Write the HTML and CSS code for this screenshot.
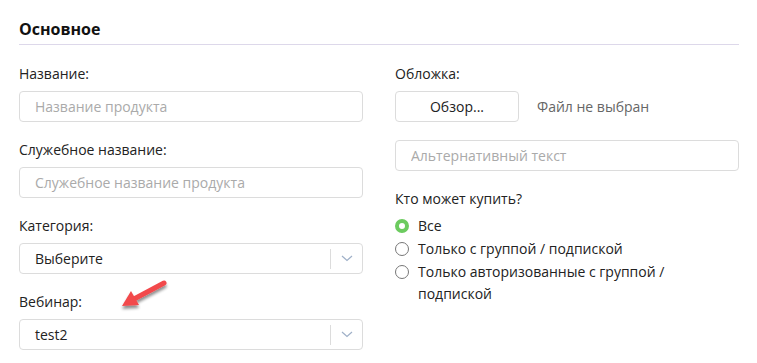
FILE: index.html
```html
<!DOCTYPE html>
<html lang="ru">
<head>
    <meta charset="UTF-8">
    <meta name="viewport" content="width=device-width, initial-scale=1.0">
    <title>Основное</title>
    <link rel="stylesheet" href="styles.css">
</head>
<body>
    <div class="page">
        <h2 class="section-title">Основное</h2>
        <div class="columns">
            <div class="col">
                <div class="field">
                    <label class="field-label">Название:</label>
                    <input class="text-input" type="text" placeholder="Название продукта">
                </div>
                <div class="field">
                    <label class="field-label">Служебное название:</label>
                    <input class="text-input" type="text" placeholder="Служебное название продукта">
                </div>
                <div class="field">
                    <label class="field-label">Категория:</label>
                    <div class="select">
                        <span class="select-value">Выберите</span>
                        <span class="select-arrow">
                            <svg width="12" height="7" viewBox="0 0 12 7"><path d="M1 1l5 4.5L11 1" fill="none" stroke="#9fb0c8" stroke-width="1.2"/></svg>
                        </span>
                    </div>
                </div>
                <div class="field webinar">
                    <label class="field-label">Вебинар:</label>
                    <div class="select">
                        <span class="select-value">test2</span>
                        <span class="select-arrow">
                            <svg width="12" height="7" viewBox="0 0 12 7"><path d="M1 1l5 4.5L11 1" fill="none" stroke="#9fb0c8" stroke-width="1.2"/></svg>
                        </span>
                    </div>
                    <!-- стрелка-пометка -->
                    <svg class="pointer" width="60" height="40" viewBox="0 0 60 40">
                        <defs>
                            <filter id="sh" x="-30%" y="-30%" width="160%" height="160%">
                                <feGaussianBlur in="SourceAlpha" stdDeviation="1.6"/>
                                <feOffset dx="0" dy="3"/>
                                <feComponentTransfer><feFuncA type="linear" slope="0.45"/></feComponentTransfer>
                                <feMerge><feMergeNode/><feMergeNode in="SourceGraphic"/></feMerge>
                            </filter>
                        </defs>
                        <g filter="url(#sh)">
                            <path d="M54 6 L24 22" stroke="#f2484b" stroke-width="5" stroke-linecap="round" fill="none"/>
                            <path d="M12 29 L21 14 L29 28 Z" fill="#f2484b"/>
                        </g>
                    </svg>
                </div>
            </div>
            <div class="col">
                <div class="field">
                    <label class="field-label">Обложка:</label>
                    <div class="file-row">
                        <button class="file-btn" type="button">Обзор...</button>
                        <span class="file-name">Файл не выбран</span>
                    </div>
                </div>
                <div class="field alt-field">
                    <input class="text-input" type="text" placeholder="Альтернативный текст">
                </div>
                <div class="field">
                    <label class="field-label">Кто может купить?</label>
                    <div class="radio-list">
                        <label class="radio-row"><span class="radio checked"></span><span>Все</span></label>
                        <label class="radio-row"><span class="radio"></span><span>Только с группой / подпиской</span></label>
                        <label class="radio-row"><span class="radio"></span><span>Только авторизованные с группой / подпиской</span></label>
                    </div>
                </div>
            </div>
        </div>
    </div>
</body>
</html>
```
FILE: styles.css
```css
body {
    margin: 0;
    font-family: 'Open Sans', 'Liberation Sans', sans-serif;
    font-size: 14px;
    color: #222;
    background: #fff;
}
.page {
    padding: 0 18px 0 19px;
}
.section-title {
    margin: 0 0 19px;
    padding: 18px 0 4px;
    font-size: 16px;
    line-height: 22px;
    font-weight: 700;
    color: #111;
    border-bottom: 1px solid #ddd8ea;
}
.columns {
    display: grid;
    grid-template-columns: 344px 344px;
    column-gap: 32px;
}
.field {
    display: flex;
    flex-direction: column;
    margin-bottom: 18px;
}
.field-label {
    line-height: 20px;
    margin-bottom: 7px;
}
.text-input {
    box-sizing: border-box;
    height: 31px;
    width: 100%;
    padding: 0 15px;
    border: 1px solid #dcdcdc;
    border-radius: 4px;
    font-family: inherit;
    font-size: 14px;
    color: #222;
    outline: none;
}
.text-input::placeholder {
    color: #aaa;
}
.select {
    box-sizing: border-box;
    height: 31px;
    display: flex;
    align-items: center;
    border: 1px solid #dcdcdc;
    border-radius: 4px;
}
.select-value {
    flex: 1;
    padding-left: 15px;
}
.select-arrow {
    display: flex;
    align-items: center;
    justify-content: center;
    width: 31px;
    height: 20px;
    border-left: 1px solid #dcdcdc;
}
.webinar {
    position: relative;
}
.pointer {
    position: absolute;
    left: 91px;
    top: -15px;
}
.file-row {
    display: flex;
    align-items: center;
}
.file-btn {
    box-sizing: border-box;
    width: 124px;
    height: 31px;
    background: #fff;
    border: 1px solid #dcdcdc;
    border-radius: 4px;
    font-family: inherit;
    font-size: 14px;
    color: #222;
    margin-right: 18px;
}
.file-name {
    color: #666;
}
.alt-field {
    margin-top: 2px;
}
.radio-list {
    margin-top: -1px;
    width: 270px;
}
.radio-row {
    display: flex;
    align-items: flex-start;
    line-height: 22px;
    margin-bottom: 1px;
}
.radio {
    flex: none;
    box-sizing: border-box;
    width: 14px;
    height: 14px;
    margin: 4px 9px 0 0;
    border: 1px solid #777;
    border-radius: 50%;
}
.radio.checked {
    border: 4px solid #6ccb5f;
    background: #fff;
}
```
